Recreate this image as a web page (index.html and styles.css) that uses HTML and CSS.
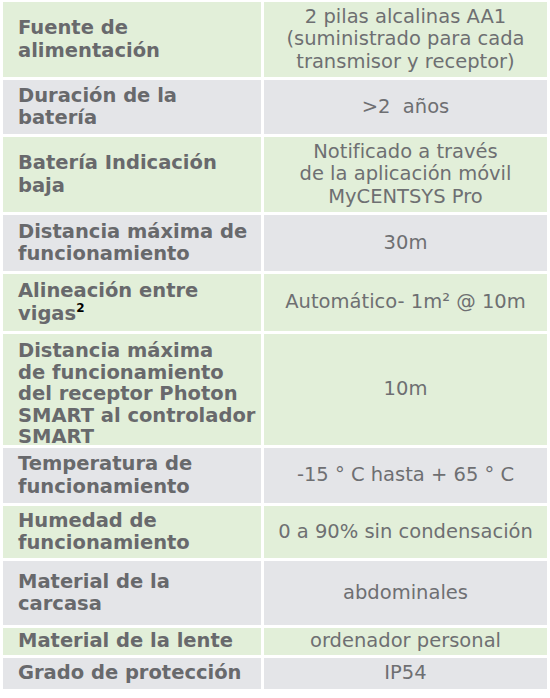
FILE: index.html
```html
<!DOCTYPE html>
<html lang="es">
<head>
<meta charset="utf-8">
<link rel="stylesheet" href="styles.css">
</head>
<body>
<div class="spec">
  <div class="k g"><span>Fuente de<br>alimentación</span></div>
  <div class="v g"><span>2 pilas alcalinas AA1<br>(suministrado para cada<br>transmisor y receptor)</span></div>

  <div class="k s"><span>Duración de la<br>batería</span></div>
  <div class="v s"><span>&gt;2&nbsp; años</span></div>

  <div class="k g"><span>Batería Indicación<br>baja</span></div>
  <div class="v g"><span>Notificado a través<br>de la aplicación móvil<br>MyCENTSYS Pro</span></div>

  <div class="k s"><span>Distancia máxima de<br>funcionamiento</span></div>
  <div class="v s"><span>30m</span></div>

  <div class="k g"><span>Alineación entre<br>vigas<sup class="sup">2</sup></span></div>
  <div class="v g"><span>Automático- 1m² @ 10m</span></div>

  <div class="k g tall"><span>Distancia máxima<br>de funcionamiento<br>del receptor Photon<br>SMART al controlador<br>SMART</span></div>
  <div class="v g"><span>10m</span></div>

  <div class="k s"><span>Temperatura de<br>funcionamiento</span></div>
  <div class="v s"><span>-15 ° C hasta + 65 ° C</span></div>

  <div class="k g"><span>Humedad de<br>funcionamiento</span></div>
  <div class="v g"><span>0 a 90% sin condensación</span></div>

  <div class="k s"><span>Material de la<br>carcasa</span></div>
  <div class="v s"><span>abdominales</span></div>

  <div class="k g"><span>Material de la lente</span></div>
  <div class="v g"><span>ordenador personal</span></div>

  <div class="k s"><span>Grado de protección</span></div>
  <div class="v s"><span>IP54</span></div>
</div>
</body>
</html>
```

FILE: styles.css
```css
html, body {
  margin: 0;
  padding: 0;
  background: #ffffff;
}
body {
  padding: 2px 0 0 3px;
  font-family: "DejaVu Sans", Verdana, sans-serif;
  font-size: 19.5px;
  line-height: 22.5px;
  color: #6e6f72;
}
.spec {
  display: grid;
  grid-template-columns: 258px 283px;
  grid-template-rows: 75px 54px 75px 56px 57px 111px 55px 52px 64px 27px 31px;
  column-gap: 3px;
  row-gap: 3px;
}
.k, .v {
  display: flex;
  align-items: center;
  white-space: nowrap;
}
.k {
  font-weight: bold;
  padding-left: 15px;
  color: #68696c;
}
.tall {
  line-height: 21.6px;
  padding-top: 9px;
}
.v {
  justify-content: center;
  text-align: center;
}
.g { background: #e2efd9; }
.s { background: #e4e5e8; }
.sup {
  color: #000;
  font-size: 12px;
  line-height: 0;
  vertical-align: 8px;
}
```
